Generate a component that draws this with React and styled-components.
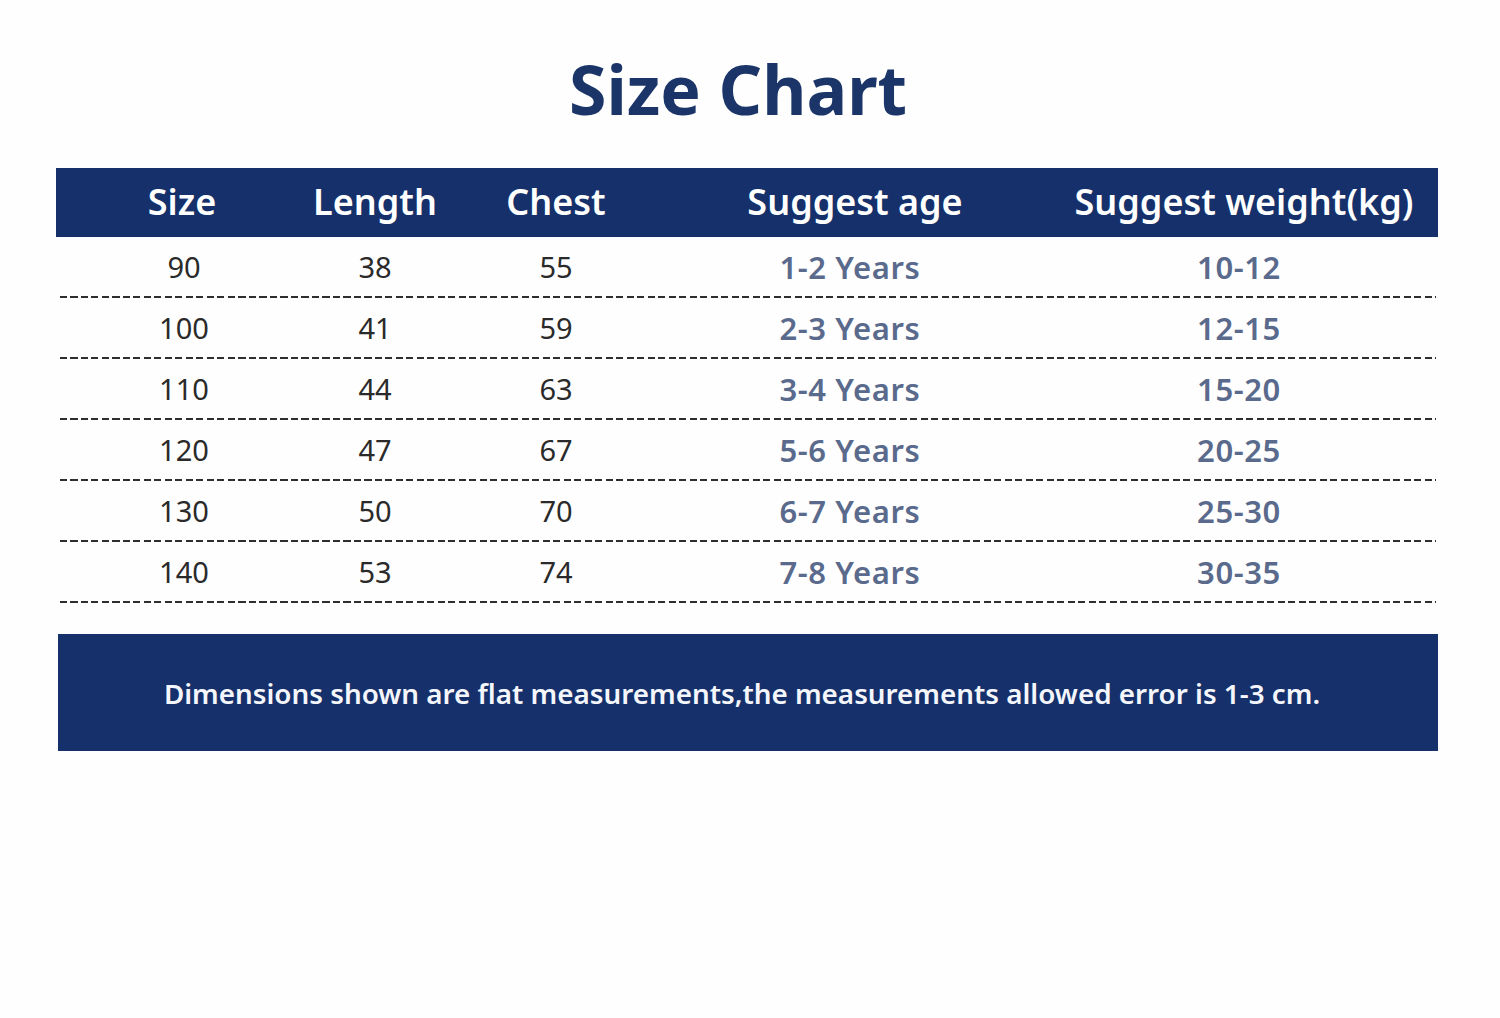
import React from "react";
import styled, { createGlobalStyle } from "styled-components";

const GlobalStyle = createGlobalStyle`
  html, body {
    margin: 0;
    padding: 0;
    background: #fefefe;
  }
  body {
    font-family: "Noto Sans", "Open Sans", sans-serif;
  }
`;

const NAVY = "#15306a";

const Page = styled.div`
  width: 1500px;
  height: 1018px;
  display: flex;
  flex-direction: column;
  background: #fefefe;
`;

const Title = styled.h1`
  margin: 49px 0 0;
  padding-right: 24px;
  text-align: center;
  font-size: 68px;
  line-height: 80px;
  font-weight: 700;
  color: #1b3568;
`;

const Table = styled.div`
  margin: 39px 0 0 56px;
  width: 1382px;
  display: flex;
  flex-direction: column;
`;

const HeaderBar = styled.div`
  display: grid;
  grid-template-columns: 252px 134px 228px 370px 398px;
  align-items: center;
  height: 69px;
  background: ${NAVY};
`;

const HeadCell = styled.div`
  text-align: center;
  color: #ffffff;
  font-size: 36px;
  font-weight: 600;
  padding-bottom: 3px;
  padding-left: ${(p) => p.$nudge || 0}px;
`;

const Row = styled.div`
  display: grid;
  grid-template-columns: 248px 134px 228px 360px 406px;
  align-items: center;
  height: 61px;
  margin: 0 2px 0 4px;
  background: repeating-linear-gradient(90deg, #2e2e2e 0 7px, transparent 7px 10.5px)
    left bottom / 100% 2px no-repeat;
`;

const Cell = styled.div`
  text-align: center;
  font-size: ${(p) => (p.$accent ? "31px" : "29px")};
  font-weight: ${(p) => (p.$accent ? 600 : 400)};
  color: ${(p) => (p.$accent ? "#5a6a8c" : "#2a2a2a")};
  letter-spacing: ${(p) => (p.$accent ? "0.6px" : "0")};
  padding-bottom: 2px;
  padding-left: ${(p) => p.$nudge || 0}px;
`;

const Note = styled.div`
  margin: 31px 0 0 58px;
  width: 1380px;
  height: 117px;
  background: ${NAVY};
  display: flex;
  align-items: center;
  justify-content: center;
  color: #f4f6fb;
  font-size: 27.8px;
  font-weight: 600;
  padding-right: 12px;
  box-sizing: border-box;
`;

const headers = ["Size", "Length", "Chest", "Suggest age", "Suggest weight(kg)"];

const rows = [
  ["90", "38", "55", "1-2 Years", "10-12"],
  ["100", "41", "59", "2-3 Years", "12-15"],
  ["110", "44", "63", "3-4 Years", "15-20"],
  ["120", "47", "67", "5-6 Years", "20-25"],
  ["130", "50", "70", "6-7 Years", "25-30"],
  ["140", "53", "74", "7-8 Years", "30-35"],
];

export default function App() {
  return (
    <Page>
      <GlobalStyle />
      <Title>Size Chart</Title>
      <Table>
        <HeaderBar>
          {headers.map((h, i) => (
            <HeadCell key={h} $nudge={i === 4 ? 10 : 0}>
              {h}
            </HeadCell>
          ))}
        </HeaderBar>
        {rows.map((r) => (
          <Row key={r[0]}>
            {r.map((v, i) => (
              <Cell key={i} $accent={i >= 3} $nudge={i === 4 ? 12 : 0}>
                {v}
              </Cell>
            ))}
          </Row>
        ))}
      </Table>
      <Note>
        Dimensions shown are flat measurements,the measurements allowed error is 1-3 cm.
      </Note>
    </Page>
  );
}
